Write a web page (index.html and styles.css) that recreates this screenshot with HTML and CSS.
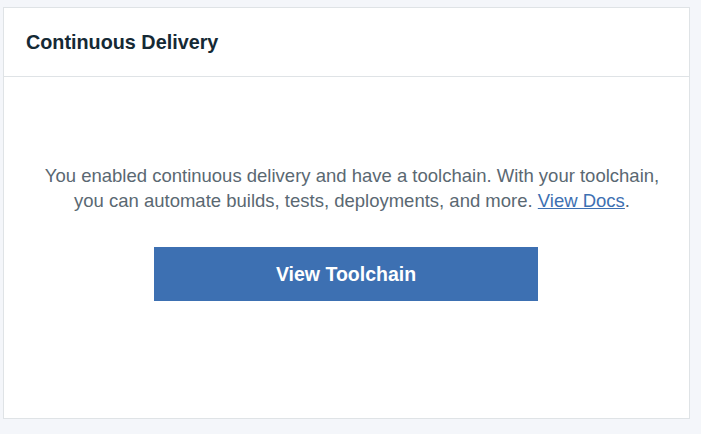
FILE: index.html
```html
<!DOCTYPE html>
<html>
<head>
<meta charset="utf-8">
<link rel="stylesheet" href="styles.css">
</head>
<body>
<div class="card">
  <div class="card-header">
    <h2 class="card-title">Continuous Delivery</h2>
  </div>
  <div class="card-body">
    <p class="desc">You enabled continuous delivery and have a toolchain. With your toolchain, you can automate builds, tests, deployments, and more. <a class="link" href="#">View Docs</a>.</p>
    <button class="btn">View Toolchain</button>
  </div>
</div>
</body>
</html>
```
FILE: styles.css
```css
html, body {
  margin: 0;
  padding: 0;
  background: #f4f6fa;
  font-family: "Liberation Sans", Arial, sans-serif;
}
body {
  padding: 7px 0 0 3px;
}
.card {
  width: 687px;
  height: 412px;
  box-sizing: border-box;
  background: #fff;
  border: 1px solid #dfe3e6;
  display: flex;
  flex-direction: column;
}
.card-header {
  height: 69px;
  box-sizing: border-box;
  border-bottom: 1px solid #dfe3e6;
  display: flex;
  align-items: center;
  padding-left: 22px;
}
.card-title {
  margin: 0;
  font-size: 19.8px;
  font-weight: bold;
  color: #152935;
}
.card-body {
  flex: 1;
  display: flex;
  flex-direction: column;
  align-items: center;
  padding-top: 86px;
}
.desc {
  margin: 0 0 0 11px;
  width: 632px;
  text-align: center;
  font-size: 18.5px;
  line-height: 25px;
  color: #5a6872;
}
.link {
  color: #3d70b2;
  text-decoration: underline;
}
.btn {
  margin: 34px 1px 0 0;
  width: 384px;
  height: 54px;
  border: 0;
  background: #3d70b2;
  color: #fff;
  font-family: "Liberation Sans", Arial, sans-serif;
  font-size: 19.5px;
  font-weight: bold;
  cursor: pointer;
}
```
